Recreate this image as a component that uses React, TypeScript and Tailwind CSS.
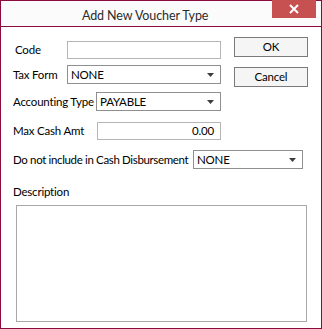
import React from "react";

const font = { fontFamily: 'Lato, "Open Sans", Arial, sans-serif' };

function Arrow() {
  return (
    <svg width="7" height="4" viewBox="0 0 7 4" className="shrink-0">
      <path d="M0 0 H7 L3.5 4 Z" fill="#3c3c3c" />
    </svg>
  );
}

function Select({ value, w }: { value: string; w: string }) {
  return (
    <div
      className={`${w} h-[19px] border border-[#8f8f8f] bg-white flex items-center justify-between pl-[3px] pr-[6px] text-black`}
    >
      <span className="leading-none">{value}</span>
      <Arrow />
    </div>
  );
}

export default function App() {
  return (
    <div
      className="w-[322px] h-[329px] border border-[#8a0c3c] bg-white flex flex-col text-[11.5px] tracking-[-0.2px] text-black"
      style={font}
    >
      <div className="relative h-[26px] shrink-0 border-b border-[#8a0c3c] bg-[#fbfbfb] flex items-center">
        <span className="ml-[81px] mt-[5px] text-[12.5px] tracking-[-0.1px] text-[#2b2b2b] leading-none">
          Add New Voucher Type
        </span>
        <div className="absolute right-[5px] top-[-1px] w-[44px] h-[18px] bg-[#c75050] flex items-center justify-center">
          <svg width="10" height="10" viewBox="0 0 10 10">
            <path d="M1 1 L9 9 M9 1 L1 9" stroke="white" strokeWidth="2" />
          </svg>
        </div>
      </div>

      <div className="flex flex-col pl-[12px]">
        <div className="flex">
          <div className="flex flex-col w-[208px]">
            <div className="mt-[14px] flex items-center h-[18px]">
              <span className="w-[54px] pl-[2px] whitespace-nowrap">Code</span>
              <div className="w-[154px] h-[18px] border border-[#b5b5b5] bg-white" />
            </div>
            <div className="mt-[6px] flex items-center h-[19px]">
              <span className="w-[54px] whitespace-nowrap">Tax Form</span>
              <Select value="NONE" w="w-[154px]" />
            </div>
            <div className="mt-[8px] flex items-center h-[19px]">
              <span className="w-[83px] whitespace-nowrap">Accounting Type</span>
              <Select value="PAYABLE" w="w-[125px]" />
            </div>
          </div>
          <div className="ml-[13px] flex flex-col">
            <div className="mt-[10px] w-[74px] h-[20px] border border-[#7a7a7a] bg-[#f5f5f5] flex items-center justify-center">
              OK
            </div>
            <div className="mt-[10px] w-[74px] h-[20px] border border-[#7a7a7a] bg-[#f5f5f5] flex items-center justify-center">
              Cancel
            </div>
          </div>
        </div>
        <div className="mt-[11px] flex items-center h-[18px]">
          <span className="w-[84px] whitespace-nowrap">Max Cash Amt</span>
          <div className="w-[124px] h-[18px] border border-[#b5b5b5] bg-white flex items-center justify-end pr-[6px]">
            0.00
          </div>
        </div>
        <div className="mt-[10px] flex items-center h-[19px]">
          <span className="w-[180px] whitespace-nowrap tracking-[-0.35px]">Do not include in Cash Disbursement</span>
          <Select value="NONE" w="w-[110px]" />
        </div>
        <div className="mt-[15px] h-[16px] leading-[16px]">Description</div>
        <div className="mt-[5px] ml-[3px] w-[291px] h-[117px] border border-[#a8a8a8] bg-white" />
      </div>
    </div>
  );
}
